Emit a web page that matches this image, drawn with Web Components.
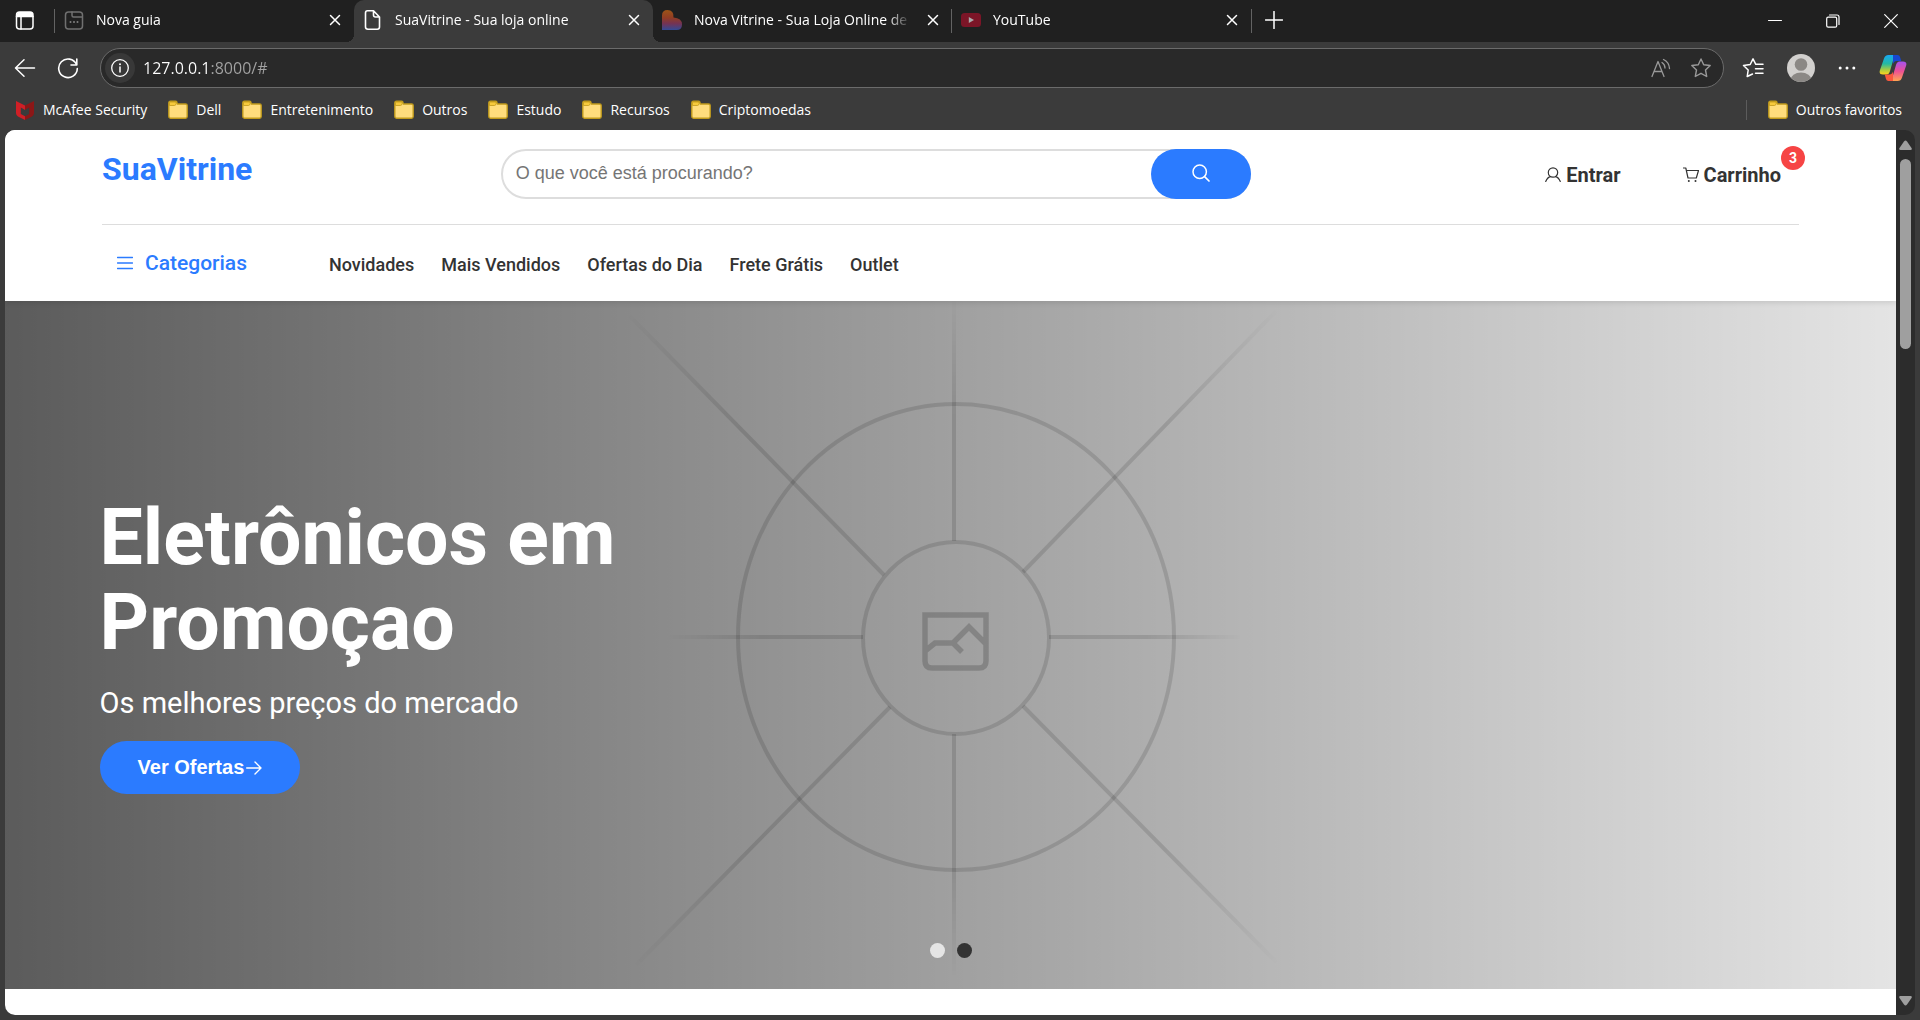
<!DOCTYPE html>
<html lang="pt-BR">
<head>
<meta charset="utf-8">
<title>SuaVitrine - Sua loja online</title>
<style>
  html, body { margin: 0; height: 100%; background: #3b3b3b; }
  body { font-family: "Open Sans", "Noto Sans", sans-serif; overflow: hidden; }
</style>
</head>
<body>
<browser-window>
  <tab-strip slot="tabs">
    <browser-tab icon="newtab">Nova guia</browser-tab>
    <browser-tab icon="page" active>SuaVitrine - Sua loja online</browser-tab>
    <browser-tab icon="vitrine">Nova Vitrine - Sua Loja Online de Produtos</browser-tab>
    <browser-tab icon="youtube" divided>YouTube</browser-tab>
  </tab-strip>
  <address-bar slot="toolbar"></address-bar>
  <bookmark-bar slot="bookmarks">
    <book-mark icon="mcafee">McAfee Security</book-mark>
    <book-mark icon="folder">Dell</book-mark>
    <book-mark icon="folder">Entretenimento</book-mark>
    <book-mark icon="folder">Outros</book-mark>
    <book-mark icon="folder">Estudo</book-mark>
    <book-mark icon="folder">Recursos</book-mark>
    <book-mark icon="folder">Criptomoedas</book-mark>
    <book-mark icon="folder" slot="end">Outros favoritos</book-mark>
  </bookmark-bar>
  <store-header></store-header>
  <hero-banner>
    <span slot="title">Eletrônicos em<br>Promoçao</span>
    <span slot="subtitle">Os melhores preços do mercado</span>
  </hero-banner>
</browser-window>

<script>
const define = (name, html, ready) => {
  const template = document.createElement('template');
  template.innerHTML = html;
  customElements.define(name, class extends HTMLElement {
    constructor() {
      super();
      this.attachShadow({ mode: 'open' }).append(template.content.cloneNode(true));
    }
    connectedCallback() { if (ready) ready(this, this.shadowRoot); }
  });
};

const line = 'fill="none" stroke="currentColor" stroke-linecap="round" stroke-linejoin="round"';
const ICONS = {
  workspace: [20, `<path d="M3 6V4.500Q3 2 5.500 2H16.500Q19 2 19 4.500V6z" fill="#fff"/><rect x="2.500" y="2" width="16.500" height="17" rx="3" ${line} stroke-width="1.500"/><path d="M2.500 6.500H19M7 7V19" ${line} stroke-width="1.500"/>`],
  newtab: [20, `<g color="#707070"><g ${line} stroke-width="1.500"><rect x="1.500" y="2" width="17" height="17" rx="3"/><path d="M8 2V5.500Q8 7 9.500 7H18"/></g></g><g fill="#808080"><circle cx="6.500" cy="12" r="1"/><circle cx="10" cy="12" r="1"/><circle cx="13.500" cy="12" r="1"/></g>`],
  page: [20, `<path d="M4.500 .8H10.500L16.500 7V17Q16.500 19.200 14.300 19.200H5Q2.500 19.200 2.500 17V3Q2.500.8 4.500.8zM10.500 1V5Q10.500 7 12.500 7H16.500" ${line} stroke-width="1.600"/>`],
  vitrine: [20, `<defs><linearGradient id="v" x1="0" y1="0" x2="0" y2="1"><stop offset="0" stop-color="#9c5417"/><stop offset=".4" stop-color="#913c24"/><stop offset=".68" stop-color="#743355"/><stop offset="1" stop-color="#334a96"/></linearGradient></defs><path d="M0 5.500Q0 0 5.500 0Q12 0 11.500 7.500Q20 8 20 14.500Q20 20 14.500 20H0z" fill="url(#v)"/>`],
  youtube: [20, `<rect y="3" width="20" height="14" rx="3.500" fill="#7c1527"/><path d="M7.800 7V13L13 10z" fill="#aaa"/>`],
  close: [12, `<path d="M1.500 1.500L10.500 10.500M10.500 1.500L1.500 10.500" ${line} stroke-width="1.500"/>`],
  plus: [18, `<path d="M9 .5V17.500M.5 9H17.500" ${line} stroke-width="1.500"/>`],
  min: [14, `<path d="M.5 6.500H13.500" ${line} stroke-width="1"/>`],
  restore: [14, `<g ${line} stroke-width="1.200"><rect x=".7" y="3.200" width="10" height="10" rx="1.500"/><path d="M3.500 1H11Q13 1 13 3V10.500"/></g>`],
  winclose: [14, `<path d="M.7.7L13.300 13.300M13.300.7L.7 13.300" ${line} stroke-width="1.200"/>`],
  back: [22, `<path d="M20.500 11H2M10 2.800L1.500 11L10 19.200" ${line} stroke-width="1.500"/>`],
  reload: [22, `<path d="M19.500 7.500A9.300 9.300 0 1 0 20.300 11.500M19.800 2V8H14" ${line} stroke-width="1.600"/>`],
  info: [20, `<circle cx="10" cy="10" r="8.300" ${line} stroke-width="1.300"/><path d="M10 9V14" ${line} stroke-width="1.500"/><circle cx="10" cy="6.300" r="1" fill="currentColor"/>`],
  read: [20, `<path d="M1 18.500L7 3.500L13 18.500M3.200 13.500H10.900M11 4.500Q14 6.500 14 10M12.500 1.500Q18 4 18.500 10.500" ${line} stroke-width="1.300"/>`],
  star: [22, `<path d="M11 2L13.700 7.800L20.200 8.500L15.500 13L16.700 19.500L11 16.300L5.300 19.500L6.500 13L1.800 8.500L8.300 7.800z" ${line} stroke-width="1.400"/>`],
  favs: [22, `<path d="M19.500 7.300H13.800L11 1.800L8.200 7.500L1.500 8.500L6.200 13L5.200 19.500L10.500 17M13.500 11.800H21M13.500 16.300H21M14.500 7.300H21" ${line} stroke-width="1.500"/>`],
  avatar: [28, `<defs><clipPath id="a"><circle cx="14" cy="14" r="14"/></clipPath></defs><g clip-path="url(#a)"><rect width="28" height="28" fill="#d2d0ce"/><circle cx="14" cy="10.500" r="6.300" fill="#8b8885"/><ellipse cx="14" cy="26" rx="10.500" ry="7.500" fill="#8b8885"/></g>`],
  dots: [18, `<g fill="currentColor"><circle cx="2.200" cy="9" r="1.500"/><circle cx="9" cy="9" r="1.500"/><circle cx="15.800" cy="9" r="1.500"/></g>`],
  copilot: [28, `<defs><linearGradient id="c1" x1="0" y1="0" x2="0" y2="1"><stop offset="0" stop-color="#18a8f5"/><stop offset=".45" stop-color="#24b9a2"/><stop offset=".75" stop-color="#a5cb43"/><stop offset="1" stop-color="#ffd21c"/></linearGradient><linearGradient id="c2" x1="0" y1="0" x2="0" y2="1"><stop offset="0" stop-color="#a552f0"/><stop offset=".5" stop-color="#ed5094"/><stop offset="1" stop-color="#ffa552"/></linearGradient></defs><path d="M17 1H9.500Q6 1 5 4.500L1 16Q-.5 20.500 4 20.500H7.500Q10 20.500 11 17L14.500 5Q15.500 1 19 1z" fill="url(#c1)"/><path d="M14 1H18.500Q20.500 1 21 3L22.300 7H17.500Q15 7 14 10z" fill="#1747d1"/><path d="M11 27H18.500Q22 27 23 23.500L27 12Q28.500 7.500 24 7.500H20.500Q18 7.500 17 11L13.500 23Q12.500 27 9 27z" fill="url(#c2)"/><path d="M14 27H9.500Q7.500 27 7 25L5.700 20.500H10.500Q13 20.500 14 17.500z" fill="#f9583d"/>`],
  mcafee: [20, `<path d="M1 1L10 5.500V10L5.800 7.500V14L10 16.300V20L3 16.500Q1 15.500 1 13z" fill="#d01f26"/><path d="M19 1L10 5.500V10L14.200 7.500V14L10 16.300V20L17 16.500Q19 15.500 19 13z" fill="#8c1717"/>`],
  folder: [20, `<path d="M.8 16V3Q.8 1.300 2.500 1.300H7.500Q9 1.300 9 3L9.500 4H17.500Q19.200 4 19.200 5.500V16.500Q19.200 18.200 17.500 18.200H2.500Q.8 18.200 .8 16z" fill="#ffdd7d" stroke="#c19b1c" stroke-width="1.400"/><path d="M1.500 5.500V3Q1.500 2 2.500 2H7Q8.300 2 8.300 3.200Q8 5.500 6.500 5.500z" fill="#f7ca3c" stroke="#c19b1c" stroke-width=".8"/>`],
  search: [18, `<circle cx="7.700" cy="7.700" r="6.700" ${line} stroke-width="1.500"/><path d="M12.600 12.600L17 17" ${line} stroke-width="1.700"/>`],
  user: [16, `<circle cx="8" cy="5.500" r="4.700" ${line} stroke-width="1.200"/><path d="M.7 14.500Q2.500 10.300 5.500 9.700M15.300 14.500Q13.500 10.300 10.500 9.700" ${line} stroke-width="1.200"/>`],
  cart: [16, `<path d="M.5 1H2.800L5 11H13.300L15.500 3.500H3.500" ${line} stroke-width="1.200"/><circle cx="5.800" cy="14" r="1" fill="currentColor"/><circle cx="12.500" cy="14" r="1" fill="currentColor"/>`],
  menu: [16, `<path d="M.5 2.500H15.500M.5 8H15.500M.5 13.500H15.500" ${line} stroke-width="1.400"/>`],
  arrow: [16, `<path d="M.7 8H15M9 2L15 8L9 14" ${line} stroke-width="1.400"/>`],
};

define('ui-icon', `<style>:host{display:inline-flex;flex:none}svg{display:block}</style>`, (el, root) => {
  if (root.querySelector('svg')) return;
  const [size, body] = ICONS[el.getAttribute('name')];
  const t = document.createElement('template');
  t.innerHTML = `<svg width="${size}" height="${size}" viewBox="0 0 ${size} ${size}" aria-hidden="true">${body}</svg>`;
  root.append(t.content);
});

define('browser-window', `
<style>
  :host { display: flex; flex-direction: column; height: 100vh; background: #3b3b3b; color: #fff; }
  .frame { flex: 1; min-height: 0; display: flex; margin: 0 5px 5px; border-radius: 10px; overflow: hidden; background: #2c2c2c; }
  main { flex: 1; min-width: 0; overflow: hidden; background: #fff; }
  .scroll { width: 19px; display: flex; flex-direction: column; align-items: center; gap: 8px; padding: 10px 0 9px; box-sizing: border-box; }
  .thumb { width: 11px; height: 190px; border-radius: 6px; background: #9f9f9f; margin-bottom: auto; }
  svg { display: block; fill: #9f9f9f; }
</style>
<slot name="tabs"></slot>
<slot name="toolbar"></slot>
<slot name="bookmarks"></slot>
<div class="frame">
  <main><slot></slot></main>
  <div class="scroll" aria-hidden="true">
    <svg width="13" height="11"><path d="M5 1.500Q6.500-.5 8 1.500L12.500 8Q13.500 10 11.500 10H1.500Q-.5 10 .5 8z"/></svg>
    <div class="thumb"></div>
    <svg width="13" height="11"><path d="M5 9.500Q6.500 11.500 8 9.500L12.500 3Q13.500 1 11.500 1H1.500Q-.5 1 .5 3z"/></svg>
  </div>
</div>`);

define('tab-strip', `
<style>
  :host { display: flex; height: 42px; background: #202020; }
  button { all: unset; display: grid; place-items: center; box-sizing: border-box; }
  .ws { width: 54px; padding: 0 14px 2px; justify-items: start; }
  .sep { width: 1px; height: 24px; margin-top: 9px; background: #636363; }
  .add { width: 44px; height: 39px; }
  .controls { margin-left: auto; display: flex; }
  .controls button { width: 58px; height: 42px; }
</style>
<button class="ws" aria-label="Espaços"><ui-icon name="workspace"></ui-icon></button>
<div class="sep"></div>
<slot></slot>
<div class="sep"></div>
<button class="add" aria-label="Nova guia"><ui-icon name="plus"></ui-icon></button>
<div class="controls">
  <button aria-label="Minimizar"><ui-icon name="min"></ui-icon></button>
  <button aria-label="Restaurar"><ui-icon name="restore"></ui-icon></button>
  <button aria-label="Fechar"><ui-icon name="winclose"></ui-icon></button>
</div>`);

define('browser-tab', `
<style>
  :host { display: flex; align-items: center; gap: 12px; position: relative; box-sizing: border-box; width: 299px; height: 42px; padding: 0 13px 2px 9px; font-size: 14px; line-height: 20px; }
  :host([active]) { background: #3b3b3b; border-radius: 10px 10px 0 0; }
  :host([active])::before, :host([active])::after { content: ""; position: absolute; bottom: 0; width: 8px; height: 8px; }
  :host([active])::before { right: 100%; background: radial-gradient(circle at 0 0, #0000 8px, #3b3b3b 8px); }
  :host([active])::after { left: 100%; background: radial-gradient(circle at 100% 0, #0000 8px, #3b3b3b 8px); }
  :host([divided])::before { content: ""; position: absolute; left: -1px; top: 9px; width: 1px; height: 24px; background: #636363; }
  .fav { display: flex; }
  .title { flex: 1; min-width: 0; overflow: hidden; white-space: nowrap; -webkit-mask: linear-gradient(to left, #0000 4px, #000 28px); mask: linear-gradient(to left, #0000 4px, #000 28px); }
  button { all: unset; display: grid; }
</style>
<span class="fav"></span>
<span class="title"><slot></slot></span>
<button aria-label="Fechar guia"><ui-icon name="close"></ui-icon></button>`, (el, root) => {
  root.querySelector('.fav').innerHTML = `<ui-icon name="${el.getAttribute('icon')}"></ui-icon>`;
});

define('address-bar', `
<style>
  :host { display: flex; align-items: center; gap: 21px; padding: 6px 13px 6px 14px; }
  button { all: unset; display: grid; place-items: center; }
  .box { flex: 1; display: flex; align-items: center; box-sizing: border-box; height: 40px; border: 1px solid #6b6b6b; border-radius: 20px; background: #292929; padding: 0 11px 0 4px; color: #999; }
  .info { width: 30px; height: 30px; border-radius: 50%; background: #383838; color: #fff; }
  input { all: unset; flex: 1; margin-left: 8px; font-size: 16px; line-height: 24px; height: 24px; background: linear-gradient(90deg, #fff 68px, #a3a3a3 68px); -webkit-background-clip: text; background-clip: text; -webkit-text-fill-color: transparent; }
  .read { margin-right: 19px; }
  .end { display: flex; align-items: center; gap: 23px; margin-left: -3px; }
</style>
<button aria-label="Voltar"><ui-icon name="back"></ui-icon></button>
<button aria-label="Atualizar"><ui-icon name="reload"></ui-icon></button>
<div class="box">
  <button class="info" aria-label="Informações do site"><ui-icon name="info"></ui-icon></button>
  <input type="text" aria-label="Endereço" value="127.0.0.1:8000/#">
  <button class="read" aria-label="Ler em voz alta"><ui-icon name="read"></ui-icon></button>
  <button aria-label="Adicionar aos favoritos"><ui-icon name="star"></ui-icon></button>
</div>
<div class="end">
  <button aria-label="Favoritos"><ui-icon name="favs"></ui-icon></button>
  <button aria-label="Perfil"><ui-icon name="avatar"></ui-icon></button>
  <button aria-label="Mais"><ui-icon name="dots"></ui-icon></button>
  <button aria-label="Copilot"><ui-icon name="copilot"></ui-icon></button>
</div>`);

define('bookmark-bar', `
<style>
  :host { display: flex; align-items: center; box-sizing: border-box; height: 36px; padding: 0 18px 4px 15px; }
  .list, .end { display: flex; align-items: center; gap: 21px; }
  .end { margin-left: auto; }
  .end::before { content: ""; width: 1px; height: 20px; background: #5c5c5c; }
</style>
<div class="list"><slot></slot></div>
<div class="end"><slot name="end"></slot></div>`);

define('book-mark', `
<style>
  :host { display: block; }
  a { display: flex; align-items: center; gap: 8px; color: #fff; text-decoration: none; font-size: 14px; line-height: 20px; white-space: nowrap; }
  span { display: flex; }
</style>
<a href="#"><span></span><slot></slot></a>`, (el, root) => {
  root.querySelector('span').innerHTML = `<ui-icon name="${el.getAttribute('icon')}"></ui-icon>`;
});

define('store-header', `
<style>
  :host { display: block; position: relative; z-index: 1; background: #fff; color: #333; padding: 0 97px; font-family: Roboto, Inter, sans-serif; box-shadow: 0 2px 5px rgba(0,0,0,.1); }
  a { color: inherit; text-decoration: none; white-space: nowrap; }
  .top { display: flex; justify-content: space-between; align-items: center; padding: 19px 0 25px; border-bottom: 1px solid #ddd; }
  .logo { color: #2b7bff; font-size: 32px; font-weight: 700; line-height: 40px; padding-bottom: 10px; }
  form { display: flex; box-sizing: border-box; width: 750px; height: 50px; border: 2px solid #ddd; border-radius: 25px; }
  input { flex: 1; min-width: 0; border: 0; outline: 0; background: none; padding: 0 13px 1px; font: 18px "Liberation Sans", Arial, sans-serif; color: #333; }
  input::placeholder { color: #757575; opacity: 1; }
  form button { width: 100px; margin: -2px; padding: 0 0 3px; border: 0; border-radius: 25px; background: #2b7bff; color: #fff; display: grid; place-items: center; }
  .user { display: flex; justify-content: flex-end; box-sizing: border-box; min-width: 300px; gap: 62px; padding: 2px 18px 0 0; font-size: 20px; font-weight: 700; line-height: 24px; }
  .user a { display: flex; align-items: center; gap: 5px; position: relative; }
  .badge { position: absolute; left: 100%; top: -17px; width: 24px; height: 24px; border-radius: 50%; background: #f64444; color: #fff; font-size: 14px; line-height: 24px; text-align: center; }
  nav { display: flex; align-items: baseline; gap: 27px; padding: 24px 15px 22px; font-size: 18px; font-weight: 500; line-height: 28px; }
  .cat { display: flex; align-items: center; gap: 12px; color: #2b7bff; font-size: 21px; margin-right: 55px; }
</style>
<div class="top">
  <a class="logo" href="#">SuaVitrine</a>
  <form role="search">
    <input type="text" aria-label="Buscar produtos" placeholder="O que você está procurando?">
    <button type="button" aria-label="Buscar"><ui-icon name="search"></ui-icon></button>
  </form>
  <div class="user">
    <a href="#"><ui-icon name="user"></ui-icon>Entrar</a>
    <a href="#"><ui-icon name="cart"></ui-icon>Carrinho<span class="badge">3</span></a>
  </div>
</div>
<nav>
  <a class="cat" href="#"><ui-icon name="menu"></ui-icon>Categorias</a>
  <a href="#">Novidades</a>
  <a href="#">Mais Vendidos</a>
  <a href="#">Ofertas do Dia</a>
  <a href="#">Frete Grátis</a>
  <a href="#">Outlet</a>
</nav>`);

define('hero-banner', `
<style>
  :host { display: grid; grid-template-rows: 1fr auto; position: relative; box-sizing: border-box; min-height: 688px; padding: 0 5%; color: #fff; background: linear-gradient(90deg, rgba(0,0,0,.6), rgba(0,0,0,0)), #e4e4e4; font-family: Roboto, Inter, sans-serif; }
  .art { position: absolute; inset: 0; width: 100%; height: 100%; }
  .copy { position: relative; align-self: center; justify-self: start; padding-top: 46px; }
  h2 { margin: 0; font-size: 77px; line-height: 85px; font-weight: 700; }
  p { margin: 18px 0 19px; font-size: 29px; line-height: 38px; }
  .cta { display: flex; align-items: center; gap: 2px; width: max-content; box-sizing: border-box; height: 53px; padding: 0 38px; border: 0; border-radius: 27px; background: #2b7bff; color: #fff; font: bold 20px "Liberation Sans", Arial, sans-serif; }
  .dots { position: relative; display: flex; gap: 12px; justify-content: center; padding-bottom: 31px; }
  .dots button { width: 15px; height: 15px; padding: 0; border: 0; border-radius: 50%; background: #e5e5e5; }
  .dots button.on { background: #333; }
</style>
<svg class="art" viewBox="0 0 1891 688" preserveAspectRatio="none" aria-hidden="true">
  <defs>
    <radialGradient id="fade" gradientUnits="userSpaceOnUse" cx="950" cy="336" r="460">
      <stop offset="0" stop-color="#fff"/><stop offset=".65" stop-color="#fff"/><stop offset="1" stop-color="#000"/>
    </radialGradient>
    <radialGradient id="near" gradientUnits="userSpaceOnUse" cx="950" cy="336" r="330">
      <stop offset="0" stop-color="#fff"/><stop offset=".58" stop-color="#fff"/><stop offset=".87" stop-color="#000"/>
    </radialGradient>
    <radialGradient id="tall" gradientUnits="userSpaceOnUse" cx="950" cy="336" r="340">
      <stop offset="0" stop-color="#fff"/><stop offset=".65" stop-color="#fff"/><stop offset="1" stop-color="#000"/>
    </radialGradient>
    <mask id="m1" maskUnits="userSpaceOnUse" x="0" y="0" width="1891" height="688"><rect width="1891" height="688" fill="url(#fade)"/></mask>
    <mask id="m2" maskUnits="userSpaceOnUse" x="0" y="0" width="1891" height="688"><rect width="1891" height="688" fill="url(#near)"/></mask>
    <mask id="m3" maskUnits="userSpaceOnUse" x="0" y="0" width="1891" height="688"><rect width="1891" height="688" fill="url(#tall)"/></mask>
  </defs>
  <g fill="none" stroke="#000" stroke-opacity=".12" stroke-width="4">
    <ellipse cx="951" cy="336" rx="218" ry="233"/>
    <ellipse cx="951" cy="337" rx="93" ry="96"/>
    <path mask="url(#m1)" d="M616 6L879 274M1275 6L1018 271M630 665L885 406M1275 665L1018 405"/>
    <path mask="url(#m2)" d="M640 336H858M1044 336H1260"/>
    <path mask="url(#m3)" d="M949 0V240M949 433V676"/>
  </g>
  <path d="M920 314H981V360Q981 367 974 367H927Q920 367 920 360zM920 350L930 342H948L964 326L981 343M948 342L957 351" fill="none" stroke="#000" stroke-opacity=".18" stroke-width="5.500"/>
</svg>
<div class="copy">
  <h2><slot name="title"></slot></h2>
  <p><slot name="subtitle"></slot></p>
  <button class="cta">Ver Ofertas<ui-icon name="arrow"></ui-icon></button>
</div>
<div class="dots">
  <button aria-label="Slide 1"></button>
  <button class="on" aria-label="Slide 2"></button>
</div>`);
</script>
</body>
</html>
